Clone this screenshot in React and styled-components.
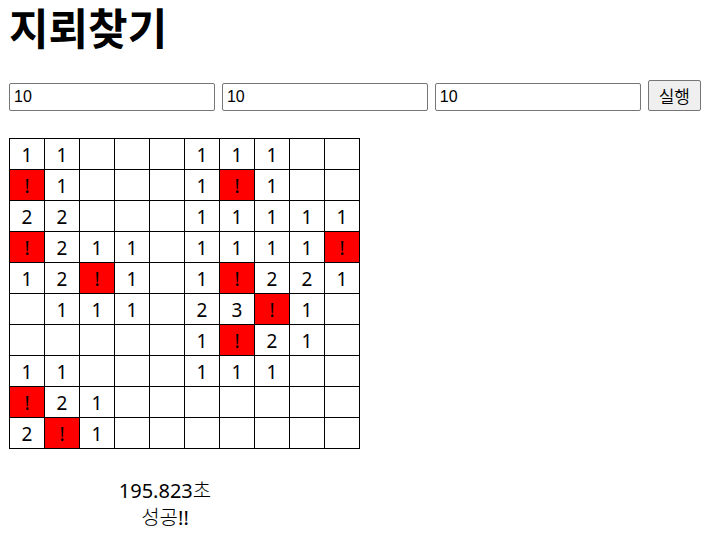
import React from "react";
import styled, { createGlobalStyle } from "styled-components";

const GlobalStyle = createGlobalStyle`
  body {
    margin: 0;
    background: #fff;
    color: #000;
    font-family: "Noto Sans", "Noto Sans CJK KR", sans-serif;
    font-size: 19px;
  }
`;

const Page = styled.main`
  padding: 0 4px 0 9px;
`;

const Title = styled.h1`
  margin: 0;
  font-family: "Noto Sans CJK KR", sans-serif;
  font-size: 43px;
  line-height: 52px;
  font-weight: 700;
`;

const Controls = styled.form`
  display: flex;
  align-items: flex-end;
  gap: 7px;
  margin-top: 28px;
`;

const Field = styled.input`
  box-sizing: border-box;
  flex: 1 1 0;
  min-width: 0;
  max-width: 206px;
  height: 28px;
  padding: 0 4px;
  border: 1px solid #767676;
  border-radius: 2px;
  background: #fff;
  color: #000;
  font-family: "Liberation Sans", "Noto Sans CJK KR", sans-serif;
  font-size: 16px;
`;

const RunButton = styled.button`
  flex: none;
  box-sizing: border-box;
  height: 31px;
  padding: 0 10px;
  border: 1px solid #767676;
  border-radius: 2px;
  background: #efefef;
  color: #000;
  font-family: "Noto Sans CJK KR", sans-serif;
  font-size: 17px;
  font-weight: 350;
`;

const Board = styled.table`
  margin-top: 27px;
  border-collapse: collapse;
`;

const Cell = styled.td`
  box-sizing: border-box;
  width: 35px;
  height: 31px;
  padding: 1px 0 0;
  border: 1px solid #000;
  background: ${(p) => (p.$mine ? "#f00" : "#fff")};
  text-align: center;
  line-height: 28px;
`;

const Result = styled.div`
  width: 312px;
  margin-top: 28px;
  text-align: center;
  line-height: 27px;
  font-family: "Noto Sans", "Noto Sans CJK KR Light", "Noto Sans CJK KR", sans-serif;
  font-size: 20px;
`;

const rows = [
  "11...111..",
  "!1...1!1..",
  "22...11111",
  "!211.1111!",
  "12!1.1!221",
  ".111.23!1.",
  ".....1!21.",
  "11...111..",
  "!21.......",
  "2!1.......",
];

const fields = ["가로", "세로", "지뢰"];

export default function App() {
  return (
    <Page>
      <GlobalStyle />
      <Title>지뢰찾기</Title>
      <Controls onSubmit={(e) => e.preventDefault()}>
        {fields.map((name) => (
          <Field key={name} type="text" aria-label={name} defaultValue="10" />
        ))}
        <RunButton type="submit">실행</RunButton>
      </Controls>
      <Board>
        <tbody>
          {rows.map((row, y) => (
            <tr key={y}>
              {[...row].map((value, x) => (
                <Cell key={x} $mine={value === "!"}>
                  {value === "." ? "" : value}
                </Cell>
              ))}
            </tr>
          ))}
        </tbody>
      </Board>
      <Result>
        <div>195.823초</div>
        <div>성공!!</div>
      </Result>
    </Page>
  );
}
